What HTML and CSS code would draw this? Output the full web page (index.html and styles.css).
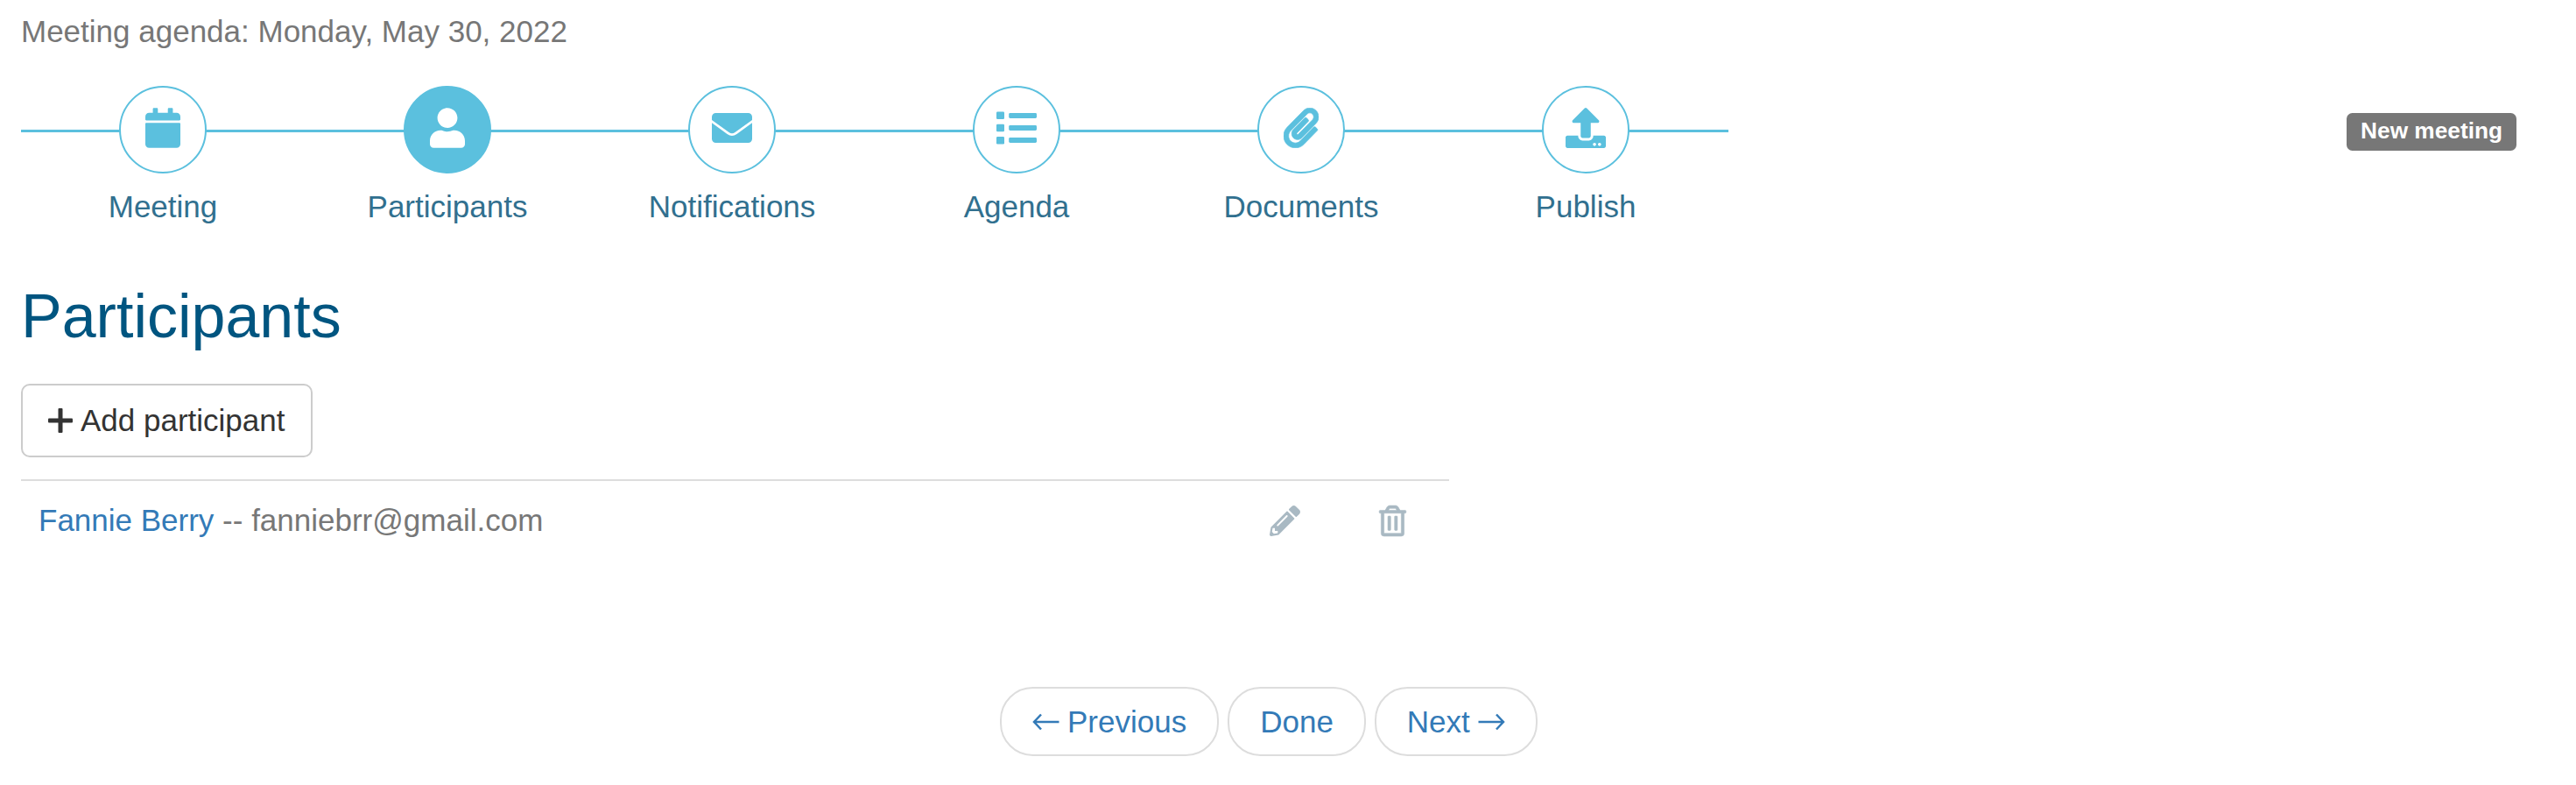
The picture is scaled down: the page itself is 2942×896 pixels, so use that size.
FILE: index.html
```html
<!DOCTYPE html>
<html lang="en">
<head>
    <meta charset="UTF-8">
    <meta name="viewport" content="width=device-width, initial-scale=1.0">
    <title>Meeting agenda</title>
    <link rel="stylesheet" href="styles.css">
</head>
<body>
    <p class="agenda-title">Meeting agenda: Monday, May 30, 2022</p>

    <!-- Wizard -->
    <div class="wizard-row">
        <div class="wizard">
            <a class="step">
                <span class="step-circle">
                    <svg width="40" height="46" viewBox="0 0 448 512"><path d="M12 192h424c6.600 0 12 5.400 12 12v260c0 26.500-21.500 48-48 48H48c-26.500 0-48-21.500-48-48V204c0-6.600 5.400-12 12-12zm436-44v-36c0-26.500-21.500-48-48-48h-48V12c0-6.600-5.400-12-12-12h-40c-6.600 0-12 5.400-12 12v52H160V12c0-6.600-5.400-12-12-12h-40c-6.600 0-12 5.400-12 12v52H48C21.500 64 0 85.500 0 112v36c0 6.600 5.400 12 12 12h424c6.600 0 12-5.400 12-12z"/></svg>
                </span>
                Meeting
            </a>
            <a class="step active">
                <span class="step-circle">
                    <svg width="40" height="46" viewBox="0 0 448 512"><path d="M224 256c70.700 0 128-57.300 128-128S294.700 0 224 0 96 57.300 96 128s57.300 128 128 128zm89.600 32h-16.700c-22.200 10.200-46.900 16-72.900 16s-50.600-5.800-72.900-16h-16.700C60.200 288 0 348.200 0 422.400V464c0 26.500 21.500 48 48 48h352c26.500 0 48-21.500 48-48v-41.600c0-74.200-60.200-134.400-134.400-134.400z"/></svg>
                </span>
                Participants
            </a>
            <a class="step">
                <span class="step-circle">
                    <svg width="46" height="46" viewBox="0 0 46 46"><path d="M4.500 6h37A4.500 4.500 0 0 1 46 10.500V14L26.500 28Q23 30.500 19.500 28L0 14V10.500A4.500 4.500 0 0 1 4.500 6zM0 17.300L17.500 30Q23 34 28.500 30L46 17.300V35.500A4.500 4.500 0 0 1 41.500 40h-37A4.500 4.500 0 0 1 0 35.500z"/></svg>
                </span>
                Notifications
            </a>
            <a class="step">
                <span class="step-circle">
                    <svg width="46" height="46" viewBox="0 0 46 46"><rect x="0" y="4.500" width="9" height="8.500" rx="1.300"/><rect x="0" y="18.700" width="9" height="8.500" rx="1.300"/><rect x="0" y="33" width="9" height="8.500" rx="1.300"/><rect x="14.200" y="6" width="31.800" height="6" rx="1.400"/><rect x="14.200" y="20" width="31.800" height="6" rx="1.400"/><rect x="14.200" y="34" width="31.800" height="6" rx="1.400"/></svg>
                </span>
                Agenda
            </a>
            <a class="step">
                <span class="step-circle">
                    <svg width="40" height="46" viewBox="0 0 448 512"><path stroke="currentColor" stroke-width="8" d="M43.246 466.142c-58.430-60.289-57.341-157.511 1.386-217.581L254.392 34c44.316-45.332 116.351-45.336 160.671 0 43.890 44.894 43.943 117.329 0 162.276L232.214 383.128c-29.855 30.537-78.633 30.111-107.982-.998-28.275-29.970-27.368-77.473 1.452-106.953l143.743-146.835c6.182-6.314 16.312-6.422 22.626-.241l22.861 22.379c6.315 6.182 6.422 16.312.241 22.626L171.427 319.927c-4.932 5.045-5.236 13.428-.648 18.292 4.372 4.634 11.245 4.711 15.688.165l182.849-186.851c19.613-20.062 19.613-52.725-.011-72.798-19.189-19.627-49.957-19.637-69.154 0L90.390 293.295c-34.763 35.560-35.299 93.120-1.191 128.313 34.010 35.093 88.985 35.137 123.058.286l172.060-175.999c6.177-6.319 16.307-6.433 22.626-.256l22.877 22.364c6.319 6.177 6.434 16.307.256 22.626l-172.060 175.998c-59.576 60.938-155.943 60.216-214.770-.485z"/></svg>
                </span>
                Documents
            </a>
            <a class="step">
                <span class="step-circle">
                    <svg width="46" height="46" viewBox="0 0 512 512"><path d="M296 384h-80c-13.300 0-24-10.700-24-24V192h-87.700c-17.800 0-26.700-21.500-14.100-34.100L242.300 5.700c7.500-7.500 19.800-7.500 27.300 0l152.200 152.200c12.600 12.600 3.700 34.100-14.100 34.100H320v168c0 13.300-10.700 24-24 24zm216-8v112c0 13.300-10.700 24-24 24H24c-13.300 0-24-10.700-24-24V376c0-13.300 10.700-24 24-24h136v8c0 30.900 25.100 56 56 56h80c30.900 0 56-25.100 56-56v-8h136c13.300 0 24 10.700 24 24zm-124 88c0-11-9-20-20-20s-20 9-20 20 9 20 20 20 20-9 20-20zm64 0c0-11-9-20-20-20s-20 9-20 20 9 20 20 20 20-9 20-20z"/></svg>
                </span>
                Publish
            </a>
        </div>
        <span class="label">New meeting</span>
    </div>

    <h2>Participants</h2>

    <div class="content">
        <button class="btn">
            <svg width="28" height="28" viewBox="0 0 28 28"><rect x="0" y="11.500" width="28" height="5" rx="1"/><rect x="11.500" y="0" width="5" height="28" rx="1"/></svg>
            <span>Add participant</span>
        </button>

        <div class="participant">
            <span class="participant-name"><a>Fannie Berry</a> -- fanniebrr@gmail.com</span>
            <svg class="icon-edit" width="35" height="35" viewBox="0 0 512 512"><path d="M497.900 142.100l-46.100 46.100c-4.700 4.700-12.300 4.700-17 0l-111-111c-4.700-4.700-4.700-12.300 0-17l46.100-46.100c18.700-18.700 49.100-18.700 67.900 0l60.100 60.100c18.800 18.700 18.800 49.100 0 67.900zM284.200 99.800L21.600 362.400.4 483.900c-2.900 16.400 11.400 30.600 27.800 27.800l121.500-21.300 262.600-262.600c4.700-4.700 4.700-12.300 0-17l-111-111c-4.800-4.700-12.400-4.700-17.100 0zM124.100 339.900c-5.500-5.500-5.500-14.300 0-19.800l154-154c5.500-5.500 14.300-5.500 19.800 0s5.500 14.300 0 19.800l-154 154c-5.500 5.500-14.300 5.500-19.800 0zM88 424h48v36.300l-64.500 11.300-31.100-31.100L51.700 376H88v48z"/></svg>
            <svg class="icon-delete" width="31" height="35" viewBox="0 0 448 512"><path stroke="currentColor" stroke-width="8" d="M268 416h24a12 12 0 0 0 12-12V188a12 12 0 0 0-12-12h-24a12 12 0 0 0-12 12v216a12 12 0 0 0 12 12zM432 80h-82.410l-34-56.700A48 48 0 0 0 274.410 0H173.590a48 48 0 0 0-41.160 23.300L98.410 80H16A16 16 0 0 0 0 96v16a16 16 0 0 0 16 16h16v336a48 48 0 0 0 48 48h288a48 48 0 0 0 48-48V128h16a16 16 0 0 0 16-16V96a16 16 0 0 0-16-16zM171.840 50.910A6 6 0 0 1 177 48h94a6 6 0 0 1 5.150 2.910L293.610 80H154.390zM368 464H80V128h288zm-212-48h24a12 12 0 0 0 12-12V188a12 12 0 0 0-12-12h-24a12 12 0 0 0-12 12v216a12 12 0 0 0 12 12z"/></svg>
        </div>
    </div>

    <!-- Pager -->
    <div class="pager">
        <a class="pager-btn"><svg width="31" height="20" viewBox="0 0 31 20"><path d="M30.500 10H2M10 1.500L2 10l8 8.500"/></svg>Previous</a>
        <a class="pager-btn">Done</a>
        <a class="pager-btn">Next<svg width="31" height="20" viewBox="0 0 31 20"><path d="M.5 10H29M21 1.500L29 10l-8 8.500"/></svg></a>
    </div>
</body>
</html>
```
FILE: styles.css
```css
* {
    box-sizing: border-box;
}

body {
    margin: 0;
    padding: 11px 68px 0 24px;
    background-color: #fff;
    color: #777;
    font-family: "Liberation Sans", Arial, sans-serif;
    font-size: 35px;
    line-height: 50px;
}

svg {
    display: block;
    flex: none;
    fill: currentColor;
}

.agenda-title {
    margin: 0 0 37px;
}

/* Wizard */
.wizard-row {
    display: flex;
    justify-content: space-between;
    align-items: flex-start;
}

.wizard {
    display: flex;
    width: 1950px;
    background: linear-gradient(#5bc0de, #5bc0de) 0 50px / 100% 3px no-repeat;
}

.step {
    flex: 1;
    display: flex;
    flex-direction: column;
    align-items: center;
    gap: 13px;
    padding-right: 1px;
    color: #31708f;
}

.step-circle {
    display: flex;
    justify-content: center;
    align-items: center;
    width: 100px;
    height: 100px;
    padding-bottom: 4px;
    border: 2px solid #5bc0de;
    border-radius: 50%;
    background-color: #fff;
    color: #5bc0de;
}

.step.active .step-circle {
    background-color: #5bc0de;
    color: #fff;
}

.label {
    margin-top: 31px;
    padding: 7px 16px 10px;
    border-radius: 6.5px;
    background-color: #777;
    color: #fff;
    font-size: 26.25px;
    font-weight: bold;
    line-height: 26px;
}

h2 {
    margin: 62px 0 38px;
    color: #005580;
    font-size: 70px;
    font-weight: normal;
    line-height: 77px;
}

/* Participants */
.content {
    width: 1631px;
}

.btn {
    display: flex;
    align-items: center;
    gap: 9px;
    height: 84px;
    margin-bottom: 25px;
    padding: 0 30px 0 29px;
    border: 2px solid #ccc;
    border-radius: 10px;
    background-color: #fff;
    color: #333;
    font: inherit;
}

.participant {
    display: flex;
    align-items: center;
    padding: 20px 49px 20px 20px;
    border-top: 2px solid #ddd;
}

.participant-name {
    flex: 1;
}

.participant a {
    color: #337ab7;
}

.icon-edit,
.icon-delete {
    color: #a9b9c3;
    overflow: visible;
}

.icon-edit {
    margin-right: 90px;
}

/* Pager */
.pager {
    display: flex;
    gap: 10px;
    margin: 145px 0 0 1118px;
}

.pager-btn {
    display: flex;
    align-items: center;
    gap: 9px;
    height: 79px;
    padding: 0 35px;
    border: 2px solid #ddd;
    border-radius: 37.5px;
    color: #337ab7;
}

.pager-btn svg {
    fill: none;
    stroke: currentColor;
    stroke-width: 2.5;
}
```
